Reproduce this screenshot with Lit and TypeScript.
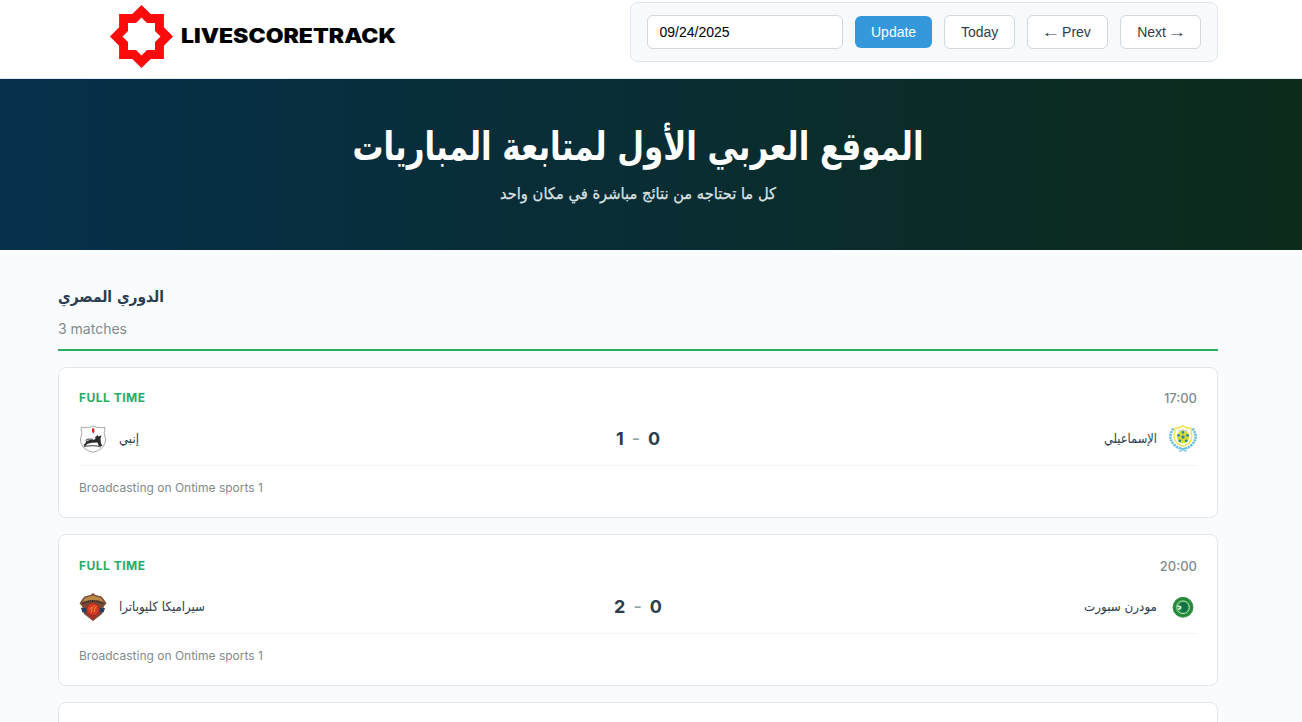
import { LitElement, html, css, svg } from "lit";
import { customElement, property } from "lit/decorators.js";

interface Match {
  status: string;
  time: string;
  home: string;
  away: string;
  homeCrest: string;
  awayCrest: string;
  homeWidth: string;
  awayWidth: string;
  score: [number, number];
  channel: string;
}

const crests: Record<string, unknown> = {
  enppi: svg`
    <path d="M2.5 2 Q5 3.5 8 2.3 Q11 3 14 .8 Q17 3 20 2.3 Q23 3.5 25.5 2 L26 5 Q24.5 7 25.5 10 Q27.5 14 26 18 Q24 25 14 27.3 Q4 25 2 18 Q.5 14 2.5 10 Q3.5 7 2 5Z" fill="#fdfdfd" stroke="#a9a9a9" stroke-width="1"/>
    <path d="M13 3.5h2.4v3.2l-1.200 1.800-1.200-1.800z" fill="#d3202a"/>
    <path d="M14 11l2 1.500 2.500-2.500 1 1.500 3-1.300-1 3.300.5 5 1.500 2.500-3.500.3-1.500-3.800-5.500.2-4.500 1-2.500 2.500-1.600-1 2.300-2.500.5-1.500 3.500-1.200 4.500-.2 1.500-1.500z" fill="#2b2b2b"/>
    <path d="M5 21.600 Q14 19.500 22 21.800 M6.500 15.500 Q9.500 13.500 14 14.500" fill="none" stroke="#666" stroke-width="1.300"/>`,
  ismaily: svg`
    <g fill="none" stroke="#6dbfe0">
      <g stroke-width="2.600" stroke-dasharray="2.200 .7">
        <path d="M4.500 3.500 Q-2 12.500 5 19.500 Q8 22.500 11 23.500"/>
        <path d="M23.500 3.500 Q30 12.500 23 19.500 Q20 22.500 17 23.500"/>
      </g>
      <path d="M10 22.500Q14 23.500 17.500 26.500M18 22.500Q14 23.500 10.500 26.500" stroke-width="1.500"/>
    </g>
    <path d="M5.500 3.500 Q10 3.500 14 1 Q18 3.500 22.500 3.500 Q21.500 7 23 11 Q23 18 14 21.500 Q5 18 5 11 Q6.500 7 5.500 3.500Z" fill="#fffef0" stroke="#efe35c" stroke-width="1.500"/>
    <path d="M9 4.500l2 1.300 3-2 3 2 2-1.300-1 2.800h-8z" fill="#c9cfc4"/>
    <circle cx="14" cy="12" r="6.200" fill="#d9dc32"/>
    <g fill="#258daa"><circle cx="14" cy="12" r="1.700"/><circle cx="14" cy="7.400" r="1.300"/><circle cx="18.500" cy="10.300" r="1.400"/><circle cx="17.200" cy="15.800" r="1.400"/><circle cx="10.800" cy="15.800" r="1.400"/><circle cx="9.500" cy="10.300" r="1.400"/></g>`,
  cleopatra: svg`
    <path d="M14 0l2.500 2 6 1.500 2.500 3 2.500 4-2.500 2.500-2 8-9 7-9-7-2-8-2.500-2.500L3 6.500l2.500-3 6-1.500z" fill="#7d4a35"/>
    <path d="M14 2.500l8 2.500 3 4.500Q14 4.500 3 9.500L6 5z" fill="#bd8a45"/>
    <path d="M3.500 10.500 Q14 5.500 24.500 10.500" fill="none" stroke="#3c3030" stroke-width="2.200" stroke-dasharray="1.300 .6"/>
    <path d="M2 15h5.500v4.500H3.500zM26 15h-5.500v4.500h4z" fill="#293c62"/>
    <path d="M7 20h14l-7 7.500z" fill="#a8332c"/>
    <circle cx="14" cy="16.300" r="6.200" fill="#d63a20" stroke="#8d2c24" stroke-width=".8"/>
    <path d="M15.500 12.500q-3.500 2-3 7M17.500 13q-3 3-2 6M12.500 14l-2 2.500" fill="none" stroke="#f08a35" stroke-width="1"/>`,
  modern: svg`
    <circle cx="14" cy="14.300" r="10" fill="#2b9a3c" stroke="#248134" stroke-width=".8"/>
    <circle cx="14" cy="14.300" r="8.400" fill="none" stroke="#1d7440" stroke-width="1.300" stroke-dasharray="1.300 .9"/>
    <circle cx="14" cy="14.300" r="6.300" fill="#269047" stroke="#b9dcbd" stroke-width="1"/>
    <path d="M8.500 13l3.200 1-.5 1.500-2.200.8" fill="none" stroke="#e6f5e8" stroke-width="1.400"/>
    <path d="M10.500 11q4-3.500 7.500 0 2 4-1 7.500l-4 .5q-1.500-1 0-2.500 2-2-2.500-5.500z" fill="#127043"/>`,
};

@customElement("team-crest")
class TeamCrest extends LitElement {
  @property() name = "";
  static styles = css`
    :host { display: block; width: 28px; height: 28px; flex: none; }
    svg { display: block; width: 28px; height: 28px; }
  `;
  render() {
    return html`<svg viewBox="0 0 28 28" aria-hidden="true">${crests[this.name]}</svg>`;
  }
}

@customElement("match-card")
class MatchCard extends LitElement {
  @property({ attribute: false }) match!: Match;
  static styles = css`
    :host {
      display: block; box-sizing: border-box; height: 151.8px; padding: 20px;
      background: #fff; border: 1px solid #e1e8ed; border-radius: 8px;
    }
    .head { display: flex; justify-content: space-between; align-items: center; height: 20.8px; margin-bottom: 16px; }
    .status { padding-top: 1.6px; font-size: 12px; line-height: 20.8px; font-weight: 650; letter-spacing: .5px; color: #27ae60; }
    .time { font-size: 13px; line-height: 20px; font-weight: 500; color: #7f8c8d; }
    .teams { display: grid; grid-template-columns: 1fr auto 1fr; align-items: center; height: 28.8px; }
    .team { display: flex; align-items: center; gap: 12px; }
    .away { flex-direction: row-reverse; }
    .name { height: 28px; overflow: visible; font-family: "DejaVu Sans", sans-serif; }
    .name text { font-size: 13px; fill: #2c3e50; }
    .score { display: flex; align-items: center; gap: 8px; font-size: 18px; font-weight: 700; color: #2c3e50; }
    .dash { font-weight: 500; color: #95a5a6; }
    .foot { margin-top: 12px; padding-top: 12px; border-top: 1px solid #f1f3f4; font-size: 12px; line-height: 19.2px; color: #7f8c8d; }
  `;
  private team(name: string, width: string) {
    return html`<svg class="name" width=${width} height="28" direction="rtl">
      <text x=${width} y="18" textLength=${width} lengthAdjust="spacingAndGlyphs">${name}</text>
    </svg>`;
  }
  render() {
    const m = this.match;
    return html`
      <div class="head"><span class="status">${m.status}</span><span class="time">${m.time}</span></div>
      <div class="teams">
        <div class="team"><team-crest name=${m.homeCrest}></team-crest>${this.team(m.home, m.homeWidth)}</div>
        <div class="score"><span>${m.score[0]}</span><span class="dash">-</span><span>${m.score[1]}</span></div>
        <div class="team away"><team-crest name=${m.awayCrest}></team-crest>${this.team(m.away, m.awayWidth)}</div>
      </div>
      <div class="foot">${m.channel}</div>`;
  }
}

const matches: Match[] = [
  { status: "FULL TIME", time: "17:00", home: "إنبي", away: "الإسماعيلي", homeCrest: "enppi", awayCrest: "ismaily", homeWidth: "20", awayWidth: "53", score: [1, 0], channel: "Broadcasting on Ontime sports 1" },
  { status: "FULL TIME", time: "20:00", home: "سيراميكا كليوباترا", away: "مودرن سبورت", homeCrest: "cleopatra", awayCrest: "modern", homeWidth: "86", awayWidth: "73", score: [2, 0], channel: "Broadcasting on Ontime sports 1" },
];

@customElement("app-root")
class AppRoot extends LitElement {
  static styles = css`
    :host {
      display: block; height: 722px; overflow: hidden; background: #fafbfc;
      font-family: Inter, sans-serif; color: #2c3e50;
    }
    .header { box-sizing: border-box; height: 79px; background: #fff; border-bottom: 1px solid #e1e8ed; }
    .wrap { box-sizing: border-box; width: 1276px; padding: 0 58px; }
    .bar { display: flex; justify-content: space-between; align-items: flex-start; padding-top: 2px; }
    .brand { display: flex; align-items: center; gap: 8px; height: 68px; margin-left: 52px; }
    .star { width: 63px; height: 63px; }
    .word { width: 216px; height: 24px; overflow: visible; }
    .word text { font: 900 19.5px Inter, sans-serif; fill: #000; }
    .controls {
      box-sizing: border-box; display: flex; align-items: center; gap: 12px; height: 60px; padding: 0 16px;
      background: #f8f9fa; border: 1px solid #e1e8ed; border-radius: 8px;
    }
    input, button { box-sizing: border-box; margin: 0; font: 14px "Liberation Sans", Arial, sans-serif; border-radius: 6px; height: 34px; }
    input { width: 196px; padding: 0 11.5px; border: 1px solid #d1d9e0; background: #fff; color: #000; }
    button { padding: 0 16px; border: 1px solid #d1d9e0; background: #fff; color: #2c3e50; white-space: nowrap; }
    .primary { height: 32px; border: 0; background: #3498db; color: #fff; width: 77px; }
    .today { width: 71px; }
    .step { width: 81px; padding: 0; }
    .arrow { display: inline-block; width: 14px; transform: translateY(-1px) scale(1.35, 1.1); }
    .hero { height: 171px; background: linear-gradient(90deg, #06304b 0%, #092d33 50%, #0c2b1b 100%); }
    .heroText { display: block; width: 1276px; height: 171px; font-family: "DejaVu Sans", sans-serif; }
    .title { font-size: 39px; font-weight: 700; fill: #fff; }
    .sub { font-size: 16px; fill: #dce2e3; stroke: #dce2e3; stroke-width: .25px; }
    .league { padding-top: 33px; }
    .leagueHead { box-sizing: border-box; height: 68px; border-bottom: 2px solid #27ae60; margin-bottom: 15.6px; }
    .leagueName { display: block; width: 106px; height: 35px; overflow: visible; font-family: "DejaVu Sans", sans-serif; }
    .leagueName text { font-size: 16px; font-weight: 700; fill: #2c3e50; }
    .count { font-size: 14px; line-height: 22px; color: #7f8c8d; }
    .list { display: flex; flex-direction: column; gap: 16px; }
    .next { box-sizing: border-box; height: 151.8px; background: #fff; border: 1px solid #e1e8ed; border-radius: 8px; }
  `;
  render() {
    return html`
      <header class="header"><div class="wrap bar">
        <div class="brand">
          <svg class="star" viewBox="0 0 63 63" aria-hidden="true">
            <path fill="#fb0b0c" d="M31.500 0L40.700 9.100H53.900V22.300L63 31.500L53.900 40.700V53.900H40.700L31.500 63L22.300 53.900H9.100V40.700L0 31.500L9.100 22.300V9.100H22.300Z"/>
            <path fill="#fff" d="M31.500 12.500L37 18H45V26L50.500 31.500L45 37V45H37L31.500 50.500L26 45H18V37L12.500 31.500L18 26V18H26Z"/>
          </svg>
          <svg class="word"><text x="0" y="19.200" textLength="215" lengthAdjust="spacingAndGlyphs">LIVESCORETRACK</text></svg>
        </div>
        <div class="controls">
          <input type="text" .value=${"09/24/2025"} aria-label="Date" />
          <button class="primary">Update</button>
          <button class="today">Today</button>
          <button class="step"><span class="arrow">←</span> Prev</button>
          <button class="step">Next <span class="arrow">→</span></button>
        </div>
      </div></header>
      <section class="hero">
        <svg class="heroText" direction="rtl">
          <text class="title" x="923.500" y="80.500" textLength="571" lengthAdjust="spacingAndGlyphs">الموقع العربي الأول لمتابعة المباريات</text>
          <text class="sub" x="776" y="120" textLength="276" lengthAdjust="spacingAndGlyphs">كل ما تحتاجه من نتائج مباشرة في مكان واحد</text>
        </svg>
      </section>
      <main class="wrap league">
        <div class="leagueHead">
          <svg class="leagueName" direction="rtl"><text x="106" y="19" textLength="106" lengthAdjust="spacingAndGlyphs">الدوري المصري</text></svg>
          <div class="count">3 matches</div>
        </div>
        <div class="list">
          ${matches.map((m) => html`<match-card .match=${m}></match-card>`)}
          <div class="next"></div>
        </div>
      </main>`;
  }
}
